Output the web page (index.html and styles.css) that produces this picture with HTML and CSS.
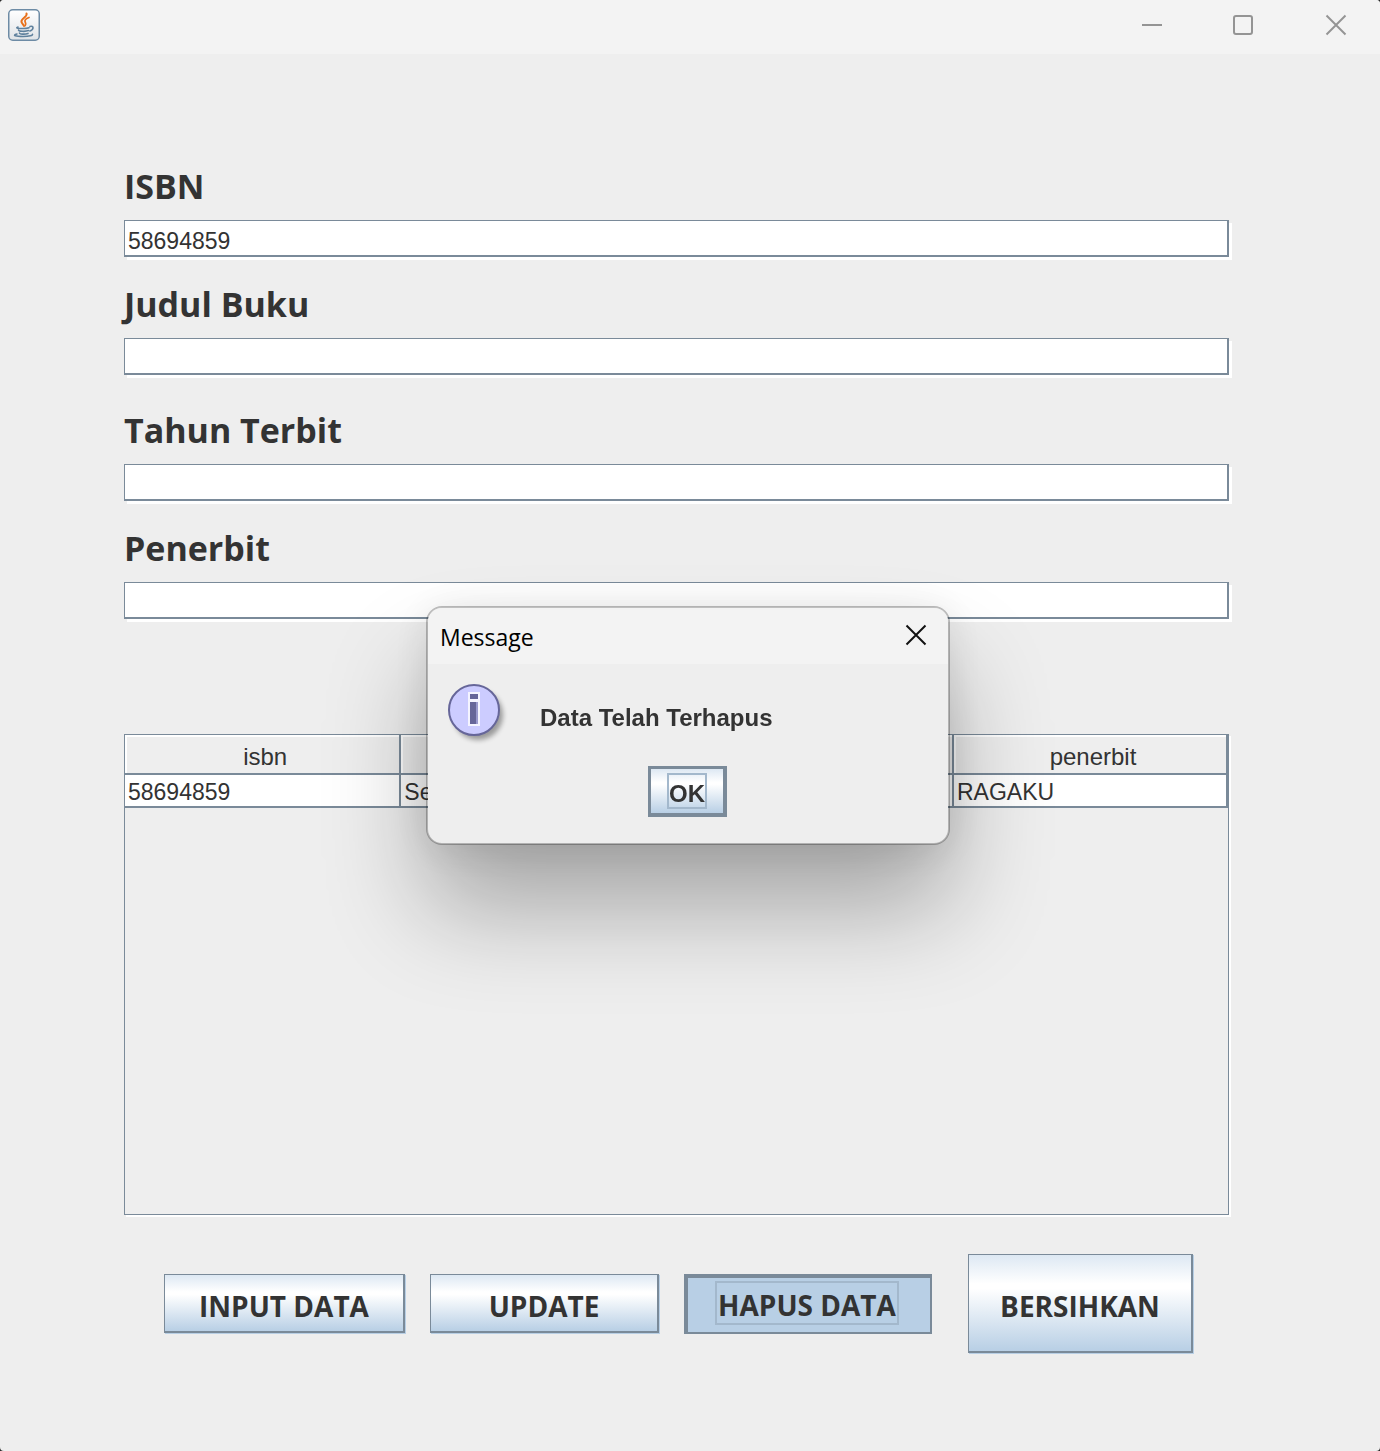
FILE: index.html
```html
<!DOCTYPE html>
<html lang="id">
<head>
<meta charset="utf-8">
<meta name="viewport" content="width=device-width, initial-scale=1">
<title>Data Buku</title>
<link rel="stylesheet" href="styles.css">
</head>
<body>
<div class="window">
  <header class="titlebar">
    <svg class="app-icon" viewBox="0 0 32 32" aria-hidden="true">
      <defs><linearGradient id="tile" x1="0" y1="0" x2="0" y2="1"><stop offset="0" stop-color="#fff"/><stop offset="1" stop-color="#dfe3e7"/></linearGradient></defs>
      <rect x="0.75" y="0.75" width="30.5" height="30.5" rx="4" fill="url(#tile)" stroke="#6d8ba5" stroke-width="1.5"/>
      <g fill="none" stroke-linecap="round">
        <path d="M18.500 4.500c1.500 3.500-6 5-5 8.500.4 1.500 2 2.500 2.500 4" stroke="#e8701a" stroke-width="2"/>
        <path d="M21 8.500c-2.500 1-4.500 2.300-4 4 .4 1.300 1.500 2 .2 4" stroke="#e8701a" stroke-width="1.700"/>
        <path d="M10 18c-3.500 1.200 1 1.600 5 1.500 2.500 0 4.500-.3 6-.8M10.500 21c0 1.500 7 1.800 10 .6M11.500 24c0 1.200 5.500 1.600 8.500.4M22 17.500c4-1.200 4 3 0 4.500" stroke="#5f819d" stroke-width="1.600"/>
        <path d="M9 25c-5.500 1.500-1 2.500 6 2.500 6.500 0 10-1 9.500-2.300" stroke="#5f819d" stroke-width="1.500"/>
      </g>
    </svg>
    <div class="window-controls">
      <button class="control" type="button" aria-label="Minimize"><svg viewBox="0 0 22 22"><path d="M1 11h20"/></svg></button>
      <button class="control" type="button" aria-label="Maximize"><svg viewBox="0 0 22 22"><rect x="1" y="2" width="18" height="18" rx="2"/></svg></button>
      <button class="control" type="button" aria-label="Close"><svg viewBox="0 0 22 22"><path d="M1.500 1.500l19 19M20.500 1.500l-19 19"/></svg></button>
    </div>
  </header>

  <main class="content">
    <form class="fields">
      <div class="group">
        <div class="field"><label for="isbn">ISBN</label><input id="isbn" type="text" value="58694859"></div>
        <div class="field"><label for="judul">Judul Buku</label><input id="judul" type="text"></div>
      </div>
      <div class="group">
        <div class="field"><label for="tahun">Tahun Terbit</label><input id="tahun" type="text"></div>
        <div class="field"><label for="penerbit">Penerbit</label><input id="penerbit" type="text"></div>
      </div>
    </form>

    <div class="table-pane">
      <table class="books">
        <thead><tr><th scope="col">isbn</th><th scope="col"></th><th scope="col"></th><th scope="col" class="last">penerbit</th></tr></thead>
        <tbody><tr><td>58694859</td><td>Se</td><td></td><td>RAGAKU</td></tr></tbody>
      </table>
    </div>

    <div class="actions">
      <button class="button input-data" type="button">INPUT DATA</button>
      <button class="button update" type="button">UPDATE</button>
      <button class="button pressed" type="button"><span class="focus">HAPUS DATA</span></button>
      <button class="button clear" type="button">BERSIHKAN</button>
    </div>
  </main>
</div>

<div class="overlay">
  <section class="dialog" role="dialog" aria-labelledby="dialog-title">
    <header class="dialog-bar">
      <h1 id="dialog-title">Message</h1>
      <button class="dialog-close" type="button" aria-label="Close"><svg viewBox="0 0 22 22"><path d="M1.500 1.500l19 19M20.500 1.500l-19 19"/></svg></button>
    </header>
    <div class="dialog-body">
      <div class="message">
        <svg class="info" viewBox="0 0 64 64" aria-hidden="true">
          <defs><filter id="soft" x="-20%" y="-20%" width="140%" height="140%"><feGaussianBlur stdDeviation="2.500"/></filter></defs>
          <circle cx="31" cy="32" r="25" fill="#000" opacity=".35" filter="url(#soft)"/>
          <circle cx="27" cy="27" r="25" fill="#ccccff" stroke="#666699" stroke-width="2"/>
          <path d="M21 9h12v34H21z" fill="#f4f4ff"/>
          <path d="M23 11h8v5h-8zM23 19h8v22h-8z" fill="#666699"/>
          <path d="M29 19h2v22h-2z" fill="#9999cc"/>
        </svg>
        <p>Data Telah Terhapus</p>
      </div>
      <button class="ok" type="button"><span>OK</span></button>
    </div>
  </section>
</div>
</body>
</html>
```
FILE: styles.css
```css
* { box-sizing: border-box; }

html { background: #2b2b2b; }

body {
  margin: 0;
  color: #333;
  font-family: "Liberation Sans", Arial, sans-serif;
  font-size: 23px;
}

button { font: inherit; color: inherit; cursor: pointer; }

.window {
  display: flex;
  flex-direction: column;
  min-height: 100vh;
  border-radius: 4px;
  background: #eee;
  overflow: hidden;
}

.titlebar {
  display: flex;
  justify-content: space-between;
  align-items: center;
  height: 54px;
  padding: 0 0 4px 8px;
  background: #f3f3f3;
}

.app-icon { width: 32px; height: 32px; }

.window-controls { display: flex; gap: 4px; }

.control {
  display: grid;
  place-items: center;
  width: 88px;
  height: 50px;
  padding: 0;
  border: 0;
  background: none;
}

.control svg, .dialog-close svg {
  width: 22px;
  height: 22px;
  fill: none;
  stroke: #949494;
  stroke-width: 2;
}

.content {
  flex: 1;
  display: flex;
  flex-direction: column;
  padding: 108px 151px 98px 124px;
}

.fields { display: flex; flex-direction: column; gap: 31px; }
.group { display: flex; flex-direction: column; gap: 23px; }
.field { display: flex; flex-direction: column; gap: 10px; }

.field label {
  font: bold 34px/48px "Open Sans", "Segoe UI", sans-serif;
}

.field input {
  width: 100%;
  height: 37px;
  padding: 7px 3px 0;
  border: solid #7a8a99;
  border-width: 1px 2px 2px 1px;
  background: #fff;
  box-shadow: 3px 3px 0 #fff;
  font: inherit;
  color: inherit;
  outline: 0;
}

.table-pane {
  flex: 1;
  margin-top: 115px;
  border: 1px solid #7a8a99;
  box-shadow: 2px 2px 0 #fff;
}

.books {
  width: 100%;
  table-layout: fixed;
  border-collapse: separate;
  border-spacing: 0;
  line-height: 28px;
}

.books th {
  height: 40px;
  padding: 6px 0 0 6px;
  border: solid #7a8a99;
  border-width: 0 2px 2px 0;
  box-shadow: inset 2px 2px 0 #fff;
  font-size: 24px;
  font-weight: normal;
}

.books .last { width: 274px; }

.books td {
  height: 33px;
  padding: 3px 3px 0;
  border: solid #7a8a99;
  border-width: 0 2px 2px 0;
  background: #fff;
}

.actions {
  display: flex;
  align-items: center;
  gap: 25px;
  margin: 39px 0 0 40px;
}

.button {
  height: 59px;
  padding: 5px 0 0;
  border: solid #7a8a99;
  border-width: 1px 2px 2px 1px;
  background: linear-gradient(#dde8f3, #fff 30%, #fff 35%, #b8cfe5);
  box-shadow: 1px 1px 0 #b8cfe5;
  font: bold 28px/38px "Open Sans", "Segoe UI", sans-serif;
}

.input-data { width: 241px; }
.update { width: 229px; }

.pressed {
  width: 248px;
  height: 60px;
  padding: 0 4px 4px 0;
  border-width: 4px 2px 2px 4px;
  background: #b8cfe5;
  box-shadow: none;
}

.focus {
  display: inline-block;
  padding: 4px 1px 0;
  border: 2px solid #a3b8cc;
  line-height: 36px;
}

.clear { width: 225px; height: 99px; margin-left: 11px; }

.overlay {
  position: fixed;
  inset: 0;
  display: grid;
  place-items: center;
  padding-right: 4px;
}

.dialog {
  width: 524px;
  border: 2px solid rgba(0, 0, 0, .25);
  border-radius: 16px;
  background: #eee;
  background-clip: padding-box;
  box-shadow: 0 64px 100px rgba(0, 0, 0, .3), 0 4px 40px rgba(0, 0, 0, .1);
}

.dialog-bar {
  display: flex;
  justify-content: space-between;
  align-items: center;
  height: 56px;
  padding: 0 21px 2px 12px;
  border-radius: 14px 14px 0 0;
  background: #f3f3f3;
}

.dialog-bar h1 {
  margin: 3px 0 0;
  color: #000;
  font: 23px/32px "Open Sans", "Segoe UI", sans-serif;
}

.dialog-close {
  display: grid;
  padding: 0;
  border: 0;
  background: none;
}

.dialog-close svg { stroke: #111; }

.dialog-body {
  display: flex;
  flex-direction: column;
  align-items: center;
  padding: 19px 20px 26px 19px;
}

.message {
  display: flex;
  align-self: stretch;
  align-items: center;
  gap: 29px;
}

.info { width: 64px; height: 64px; }

.message p { margin: 6px 0 0; font-size: 24px; font-weight: bold; line-height: 28px; }

.ok {
  display: grid;
  place-items: center;
  width: 79px;
  height: 51px;
  margin-top: 19px;
  padding: 0;
  border: solid #7a8a99;
  border-width: 3px 4px 4px 3px;
  background: linear-gradient(#dde8f3, #fff 30%, #fff 35%, #b8cfe5);
  font-size: 24px;
  font-weight: bold;
}

.ok span {
  padding: 5px 0 0;
  border: 2px solid #a3b8cc;
  line-height: 27px;
}
```
